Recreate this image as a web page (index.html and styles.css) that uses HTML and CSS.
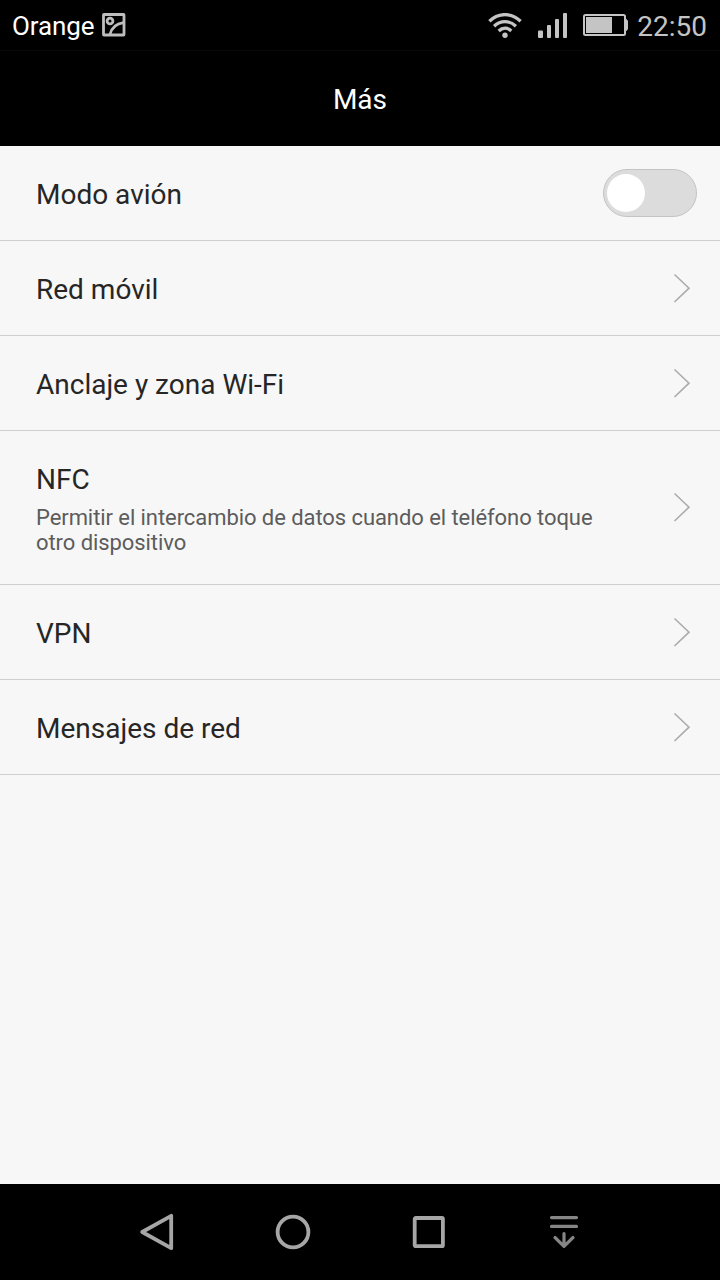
FILE: index.html
```
<!DOCTYPE html>
<html lang="es">
<head>
    <meta charset="UTF-8">
    <meta name="viewport" content="width=device-width, initial-scale=1.0">
    <title>Más</title>
    <link rel="stylesheet" href="styles.css">
</head>
<body>
    <div class="status-bar">
        <span class="carrier">Orange</span>
        <svg class="photo-icon" width="24" height="24" viewBox="0 0 24 24">
            <rect x="1.5" y="1.5" width="20.5" height="20.5" rx="0.5"/>
            <circle cx="8" cy="8" r="2.9"/>
            <path d="M8 21.5C9.5 15 14.5 10.7 21.5 9.7"/>
        </svg>
        <div class="status-icons">
            <svg class="wifi-icon" width="34" height="26" viewBox="0 0 34 26">
                <path d="M1.4 8.2C10.5 -0.6 23.5 -0.6 32.6 8.2"/>
                <path d="M6.1 13.2C12.5 7.1 21.5 7.1 27.9 13.2"/>
                <path d="M10.7 18C14.5 14.3 19.5 14.3 23.3 18"/>
                <circle cx="17" cy="22.2" r="2.7"/>
            </svg>
            <svg class="signal-icon" width="30" height="26" viewBox="0 0 30 26">
                <rect x="0" y="17.5" width="5" height="7.5" rx="1"/>
                <rect x="9" y="12" width="4" height="13" rx="1"/>
                <rect x="17" y="6" width="4" height="19" rx="1"/>
                <rect x="25" y="0" width="4" height="25" rx="1"/>
            </svg>
            <svg class="battery-icon" width="45" height="24" viewBox="0 0 45 24">
                <rect class="battery-case" x="1" y="1" width="41" height="20" rx="1.5"/>
                <rect x="3" y="3" width="26" height="16"/>
                <path d="M42 5h1.5l1.5 2v8l-1.5 2H42z"/>
            </svg>
            <span class="clock">22:50</span>
        </div>
    </div>

    <header class="title-bar">
        <h1>Más</h1>
    </header>

    <main class="settings">
        <div class="row">
            <div class="label">Modo avión</div>
            <div class="toggle"><div class="knob"></div></div>
        </div>
        <div class="row">
            <div class="label">Red móvil</div>
            <svg class="chevron" width="18" height="30" viewBox="0 0 18 30"><path d="M1.5 1.5L16 15.2L1.5 29"/></svg>
        </div>
        <div class="row">
            <div class="label">Anclaje y zona Wi-Fi</div>
            <svg class="chevron" width="18" height="30" viewBox="0 0 18 30"><path d="M1.5 1.5L16 15.2L1.5 29"/></svg>
        </div>
        <div class="row row-tall">
            <div class="text">
                <div class="label">NFC</div>
                <div class="summary">Permitir el intercambio de datos cuando el teléfono toque otro dispositivo</div>
            </div>
            <svg class="chevron" width="18" height="30" viewBox="0 0 18 30"><path d="M1.5 1.5L16 15.2L1.5 29"/></svg>
        </div>
        <div class="row">
            <div class="label">VPN</div>
            <svg class="chevron" width="18" height="30" viewBox="0 0 18 30"><path d="M1.5 1.5L16 15.2L1.5 29"/></svg>
        </div>
        <div class="row">
            <div class="label">Mensajes de red</div>
            <svg class="chevron" width="18" height="30" viewBox="0 0 18 30"><path d="M1.5 1.5L16 15.2L1.5 29"/></svg>
        </div>
    </main>

    <nav class="nav-bar">
        <svg width="40" height="40" viewBox="0 0 40 40"><path d="M34.2 3.8V36.2L5.2 20z"/></svg>
        <svg width="40" height="40" viewBox="0 0 40 40"><circle cx="20" cy="20" r="15.4"/></svg>
        <svg width="40" height="40" viewBox="0 0 40 40"><rect x="6.7" y="6" width="28.2" height="28.2" rx="1"/></svg>
        <svg class="hide-icon" width="40" height="40" viewBox="0 0 40 40">
            <path d="M7.5 5.6H32.5M7.5 14.4H32.5M20 21.5V34M11 25.5L20 34.3L29 25.5"/>
        </svg>
    </nav>
</body>
</html>
```

FILE: styles.css
```
* {
    box-sizing: border-box;
}
body {
    margin: 0;
    height: 1280px;
    display: flex;
    flex-direction: column;
    background: #f7f7f7;
    font-family: Roboto, "Liberation Sans", sans-serif;
}

/* status bar */
.status-bar {
    display: flex;
    align-items: center;
    height: 51px;
    padding: 0 13px 0 12px;
    background: #000;
    border-bottom: 1px solid #080808;
    color: #fff;
}
.carrier {
    font-size: 26px;
    line-height: 30px;
    margin-top: 1px;
    letter-spacing: -0.1px;
}
.photo-icon {
    margin: 0 0 0 7.2px;
    fill: none;
    stroke: #bebebe;
    stroke-width: 2.8;
}
.status-icons {
    display: flex;
    align-items: center;
    margin: 2px 0 0 auto;
    fill: #c4c4c4;
}
.wifi-icon path {
    fill: none;
    stroke: #c4c4c4;
    stroke-width: 3.3;
}
.signal-icon {
    margin-left: 16px;
}
.battery-icon {
    margin-left: 15px;
}
.battery-case {
    fill: none;
    stroke: #c4c4c4;
    stroke-width: 2;
}
.clock {
    margin: 2px 0 0 9px;
    font-size: 28px;
    line-height: 32px;
    color: #c4c4c4;
}

.title-bar {
    display: flex;
    align-items: center;
    justify-content: center;
    height: 95px;
    background: #000;
    color: #fff;
}
.title-bar h1 {
    margin: 2px 0 0;
    font-size: 28px;
    font-weight: 400;
    line-height: 32px;
}

/* settings list */
.settings {
    flex: 1;
}
.row {
    display: flex;
    align-items: center;
    justify-content: space-between;
    height: 95px;
    padding: 0 29px 0 36px;
    border-bottom: 1px solid #cfcfcf;
}
.row-tall {
    height: 154px;
    padding-bottom: 1px;
}
.label {
    padding-top: 2px;
    font-size: 28px;
    line-height: 33px;
    color: #262626;
}
.text {
    width: 580px;
    padding-top: 1px;
}
.summary {
    margin-top: 9px;
    font-size: 22px;
    line-height: 25px;
    letter-spacing: -0.07px;
    color: #5c5c5c;
}
.chevron {
    fill: none;
    stroke: #acacac;
    stroke-width: 1.6;
}
.toggle {
    width: 94px;
    height: 48px;
    margin-right: -6px;
    padding: 4px 3px;
    border: 1px solid #c4c4c4;
    border-radius: 24px;
    background: #dcdcdc;
}
.knob {
    width: 38px;
    height: 38px;
    border-radius: 50%;
    background: #fff;
}

.nav-bar {
    display: grid;
    grid-template-columns: repeat(4, 1fr);
    align-items: center;
    justify-items: center;
    height: 96px;
    padding: 0 88px 0 89px;
    background: #000;
    fill: none;
    stroke: #a6a6a6;
    stroke-width: 3.8;
    stroke-linejoin: round;
}
.hide-icon {
    stroke: #858585;
    stroke-width: 3.2;
    stroke-linecap: round;
}
```
